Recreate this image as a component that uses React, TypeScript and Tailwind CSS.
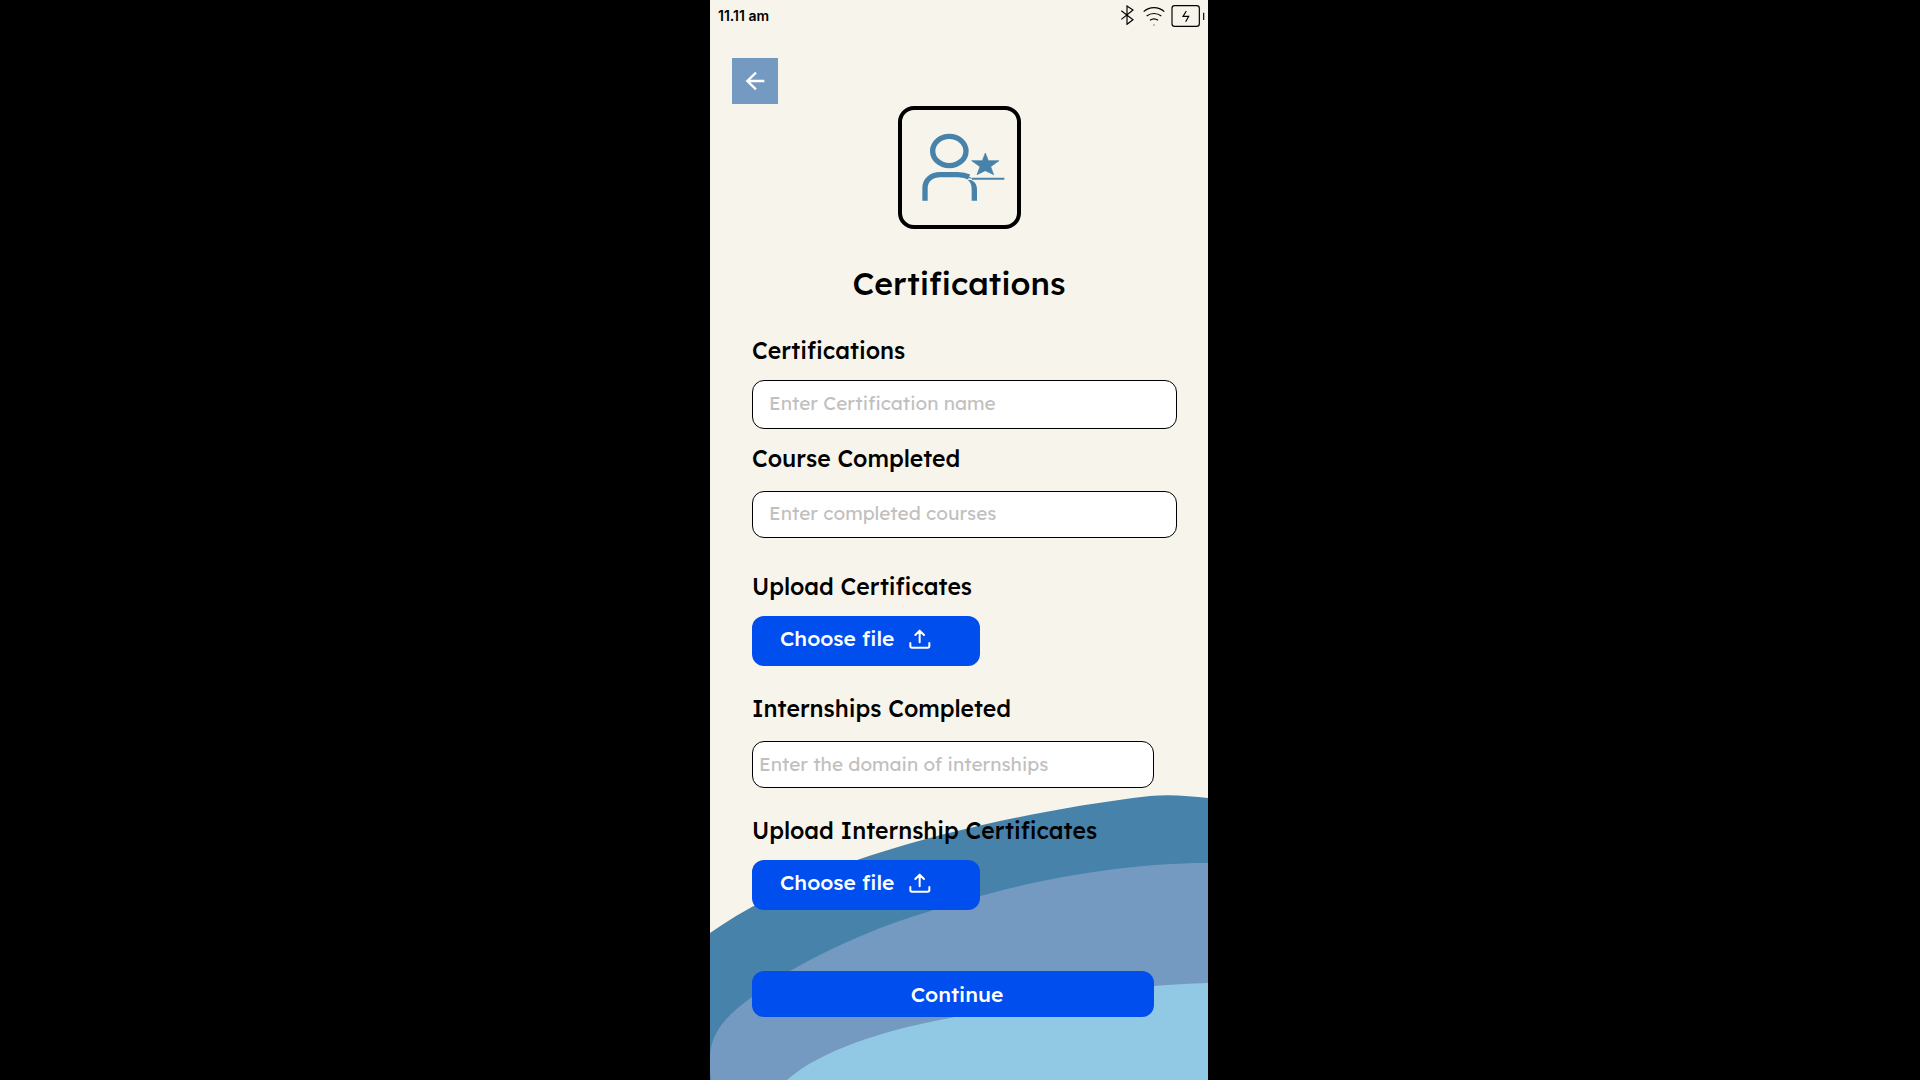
import React from "react";

function StatusBar() {
  return (
    <div className="flex h-8 items-center justify-between pr-0.5 pl-2">
      <span className="font-['Inter',sans-serif] text-sm font-semibold">11.11 am</span>
      <div className="flex items-center" aria-hidden="true">
        <svg className="mb-0.5 h-5 w-3.5" viewBox="0 0 42 60" fill="none" stroke="currentColor" strokeWidth="3.5">
          <path d="M4 17 39 44 21 58V3L39 15 4 43" />
        </svg>
        <svg className="ml-2 h-5 w-6" viewBox="0 0 72 60" fill="none" stroke="currentColor" strokeWidth="3.5">
          <path d="M5 17C23 1 49 1 67 17M14 30C27 20 45 20 58 30M24 43C31 38 41 38 48 43" />
          <circle cx="36" cy="57" r="2" fill="currentColor" stroke="none" opacity="0.6" />
        </svg>
        <svg className="ml-1 h-6 w-9" viewBox="0 0 108 72" fill="none" stroke="currentColor" strokeWidth="3.5">
          <rect x="6" y="5" width="82" height="62" rx="8" />
          <path d="M49 21 39 37H56L47 53" />
          <path d="M101 26V48" />
        </svg>
      </div>
    </div>
  );
}

function ProfileStarIcon() {
  return (
    <svg className="size-full" viewBox="65 61 345 345" fill="none" stroke="#4682aa" strokeWidth="16" aria-hidden="true">
      <ellipse cx="207" cy="184" rx="50" ry="44" />
      <path d="M134 333V296C134 270 154 255 180 255H232C246 255 256 257 266 262" />
      <path d="M263 270C282 271 290 282 290 300V333H274V300C274 285 270 278 263 272Z" fill="#4682aa" stroke="none" />
      <path d="M240 257C256 257 268 260 278 268L264 265 240 263Z" fill="#4682aa" stroke="none" />
      <path d="M275 267H372" strokeWidth="6" />
      <path
        d="M315 190 324 213H356L331 231 340 255 315 243 290 255 299 231 274 213H306Z"
        fill="#4682aa"
        stroke="#4682aa"
        strokeWidth="2"
      />
    </svg>
  );
}

function Waves() {
  return (
    <svg
      className="absolute inset-x-0 bottom-0 w-full"
      viewBox="0 0 498 286"
      preserveAspectRatio="none"
      aria-hidden="true"
    >
      <path
        fill="#4682aa"
        d="M0 139C45 108 95 84 150 65C180 55 210 46 243 38C300 24 370 10 440 2C460 0 480 2 498 4V286H0Z"
      />
      <path
        fill="#749ac1"
        d="M1 286C-1 275 0 266 0 259C3 236 18 220 42 203C52 194 66 184 80 177C125 151 175 130 227 115C300 91 400 69 498 69V286Z"
      />
      <path fill="#91c8e4" d="M77 286C110 257 170 237 240 224C310 206 390 193 498 189V286Z" />
    </svg>
  );
}

function UploadIcon() {
  return (
    <svg
      className="h-5 w-6"
      viewBox="0 0 72 60"
      fill="none"
      stroke="currentColor"
      strokeWidth="6"
      strokeLinecap="round"
      strokeLinejoin="round"
      aria-hidden="true"
    >
      <path d="M35 40V5M22 18 35 5 48 18M7 42V51Q7 56 12 56H59Q64 56 64 51V42" />
    </svg>
  );
}

const labelClass = "block text-[23px] leading-8 font-medium";
const inputClass =
  "block w-full rounded-xl border border-black bg-white text-[19px] text-black placeholder:text-[#c2bfbf] placeholder:opacity-100";

function ChooseFile({ id, labelledBy }: { id: string; labelledBy: string }) {
  return (
    <button
      id={id}
      type="button"
      aria-labelledby={`${labelledBy} ${id}`}
      className="flex h-[50px] w-[228px] items-center gap-3.5 rounded-xl bg-[#004eee] pb-1 pl-7 text-[21px] font-medium text-white"
    >
      Choose file
      <UploadIcon />
    </button>
  );
}

export default function App() {
  return (
    <div className="min-h-screen bg-black pr-0.5">
      <main className="relative isolate mx-auto min-h-screen w-full max-w-[498px] bg-[#f7f4eb] font-['Lexend','Inter',sans-serif] text-black">
        <div className="absolute inset-0 -z-10 overflow-hidden">
          <Waves />
        </div>
        <StatusBar />

        <header className="flex flex-col items-center pt-[26px]">
          <button
            type="button"
            aria-label="Back"
            className="ml-[22px] flex size-[46px] items-center justify-center self-start bg-[#749ac1] text-white"
          >
            <svg className="size-5" viewBox="0 0 60 60" fill="none" stroke="currentColor" strokeWidth="7" aria-hidden="true">
              <path d="M58 30H7M33 5 7 30 33 55" />
            </svg>
          </button>
          <div className="mt-0.5 size-[123px] rounded-2xl border-4 border-black">
            <ProfileStarIcon />
          </div>
          <h1 className="mt-[34px] text-[32px] leading-10 font-medium">Certifications</h1>
        </header>

        <form className="pt-8 pr-[31px] pb-[63px] pl-[42px]" onSubmit={(e) => e.preventDefault()}>
          <label className={labelClass} htmlFor="certification">
            Certifications
          </label>
          <input
            id="certification"
            className={`${inputClass} mt-[13px] h-[49px] px-4 pb-1`}
            placeholder="Enter Certification name"
          />

          <label className={`${labelClass} mt-3.5`} htmlFor="courses">
            Course Completed
          </label>
          <input
            id="courses"
            className={`${inputClass} mt-4 h-[47px] px-4 pb-1`}
            placeholder="Enter completed courses"
          />

          <div id="upload-certificates" className={`${labelClass} mt-[33px]`}>
            Upload Certificates
          </div>
          <div className="mt-[13px]">
            <ChooseFile id="choose-certificates" labelledBy="upload-certificates" />
          </div>

          <div className="pr-[23px]">
            <label className={`${labelClass} mt-[27px]`} htmlFor="internships">
              Internships Completed
            </label>
            <input
              id="internships"
              className={`${inputClass} mt-4 h-[47px] px-1.5 pb-0.5`}
              placeholder="Enter the domain of internships"
            />

            <div id="upload-internships" className={`${labelClass} mt-[27px]`}>
              Upload Internship Certificates
            </div>
            <div className="mt-[13px]">
              <ChooseFile id="choose-internships" labelledBy="upload-internships" />
            </div>

            <button
              type="submit"
              className="mt-[61px] h-[46px] w-full rounded-xl bg-[#004eee] pt-0.5 pl-2 text-[21px] font-medium text-white"
            >
              Continue
            </button>
          </div>
        </form>
      </main>
    </div>
  );
}
